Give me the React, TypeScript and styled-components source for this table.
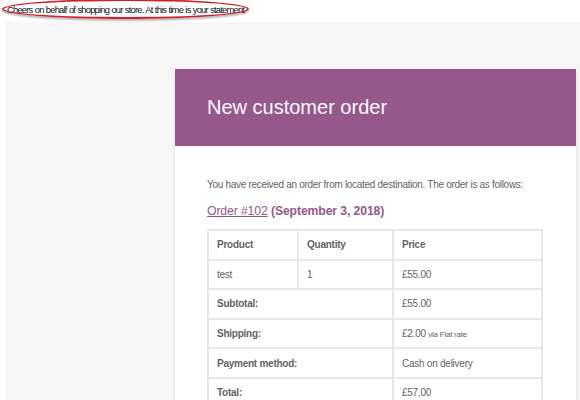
import React from "react";
import styled, { createGlobalStyle } from "styled-components";

const Global = createGlobalStyle`
  html, body { margin: 0; padding: 0; background: #ffffff; }
  body { font-family: "Liberation Sans", Arial, sans-serif; }
`;

const Page = styled.div`
  width: 580px;
  height: 400px;
  overflow: hidden;
  display: flex;
  flex-direction: column;
`;

const CaptionBar = styled.div`
  flex: 0 0 22px;
  padding-left: 7px;
  display: flex;
  align-items: flex-start;
`;

const Caption = styled.span`
  position: relative;
  margin-top: 4px;
  font-size: 9.4px;
  line-height: 11px;
  color: #111111;
  letter-spacing: -0.8px;
  word-spacing: 0.5px;
  white-space: nowrap;
`;

const Ellipse = styled.span`
  position: absolute;
  left: -5px;
  right: -5px;
  top: -5px;
  bottom: -4px;
  border: 2px solid #cf2228;
  border-radius: 50%;
  box-shadow: 0 2px 2px rgba(0, 0, 0, 0.28);
  pointer-events: none;
`;

const Canvas = styled.div`
  flex: 1 1 auto;
  min-height: 0;
  overflow: hidden;
  margin-left: 6px;
  background: #f6f6f6;
  padding: 47px 4px 0 169px;
`;

const Card = styled.div`
  width: 401px;
  background: #ffffff;
  box-shadow: 0 1px 3px rgba(0, 0, 0, 0.12);
`;

const Header = styled.div`
  height: 77px;
  background: #96588a;
  padding-left: 32px;
  display: flex;
  align-items: center;
  box-sizing: border-box;
`;

const Title = styled.h1`
  margin: 0;
  font-weight: normal;
  font-size: 20px;
  color: #fdfafd;
`;

const Body = styled.div`
  padding: 32px 32px 0 32px;
`;

const Intro = styled.p`
  margin: 0;
  font-size: 10px;
  line-height: 13px;
  color: #636363;
  letter-spacing: -0.3px;
`;

const OrderHeading = styled.h2`
  margin: 12px 0 0 0;
  font-size: 12.2px;
  line-height: 16px;
  color: #96588a;
  font-weight: bold;
  letter-spacing: -0.1px;
`;

const OrderLink = styled.a`
  color: #96588a;
  font-weight: normal;
  text-decoration: underline;
`;

const Table = styled.table`
  margin-top: 10px;
  width: 336px;
  border-collapse: collapse;
  border: 2px solid #e8e8e8;
  color: #636363;
  font-size: 10px;
`;

const Cell = styled.td<{ $bold?: boolean; $w?: number }>`
  border: 2px solid #e8e8e8;
  height: 27.6px;
  padding: 0 8px;
  text-align: left;
  font-weight: ${(p) => (p.$bold ? "bold" : "normal")};
  width: ${(p) => (p.$w ? `${p.$w}px` : "auto")};
  letter-spacing: -0.25px;
`;

const Small = styled.small`
  font-size: 8px;
`;

export default function App() {
  return (
    <Page>
      <Global />
      <CaptionBar>
        <Caption>
          Cheers on behalf of shopping our store. At this time is your statement
          <Ellipse />
        </Caption>
      </CaptionBar>
      <Canvas>
        <Card>
          <Header>
            <Title>New customer order</Title>
          </Header>
          <Body>
            <Intro>
              You have received an order from located destination. The order is
              as follows:
            </Intro>
            <OrderHeading>
              <OrderLink href="#">Order #102</OrderLink> (September 3, 2018)
            </OrderHeading>
            <Table>
              <tbody>
                <tr>
                  <Cell $bold $w={72}>Product</Cell>
                  <Cell $bold $w={77}>Quantity</Cell>
                  <Cell $bold>Price</Cell>
                </tr>
                <tr>
                  <Cell>test</Cell>
                  <Cell>1</Cell>
                  <Cell>£55.00</Cell>
                </tr>
                <tr>
                  <Cell $bold colSpan={2}>Subtotal:</Cell>
                  <Cell>£55.00</Cell>
                </tr>
                <tr>
                  <Cell $bold colSpan={2}>Shipping:</Cell>
                  <Cell>
                    £2.00 <Small>via Flat rate</Small>
                  </Cell>
                </tr>
                <tr>
                  <Cell $bold colSpan={2}>Payment method:</Cell>
                  <Cell>Cash on delivery</Cell>
                </tr>
                <tr>
                  <Cell $bold colSpan={2}>Total:</Cell>
                  <Cell>£57.00</Cell>
                </tr>
              </tbody>
            </Table>
          </Body>
        </Card>
      </Canvas>
    </Page>
  );
}
